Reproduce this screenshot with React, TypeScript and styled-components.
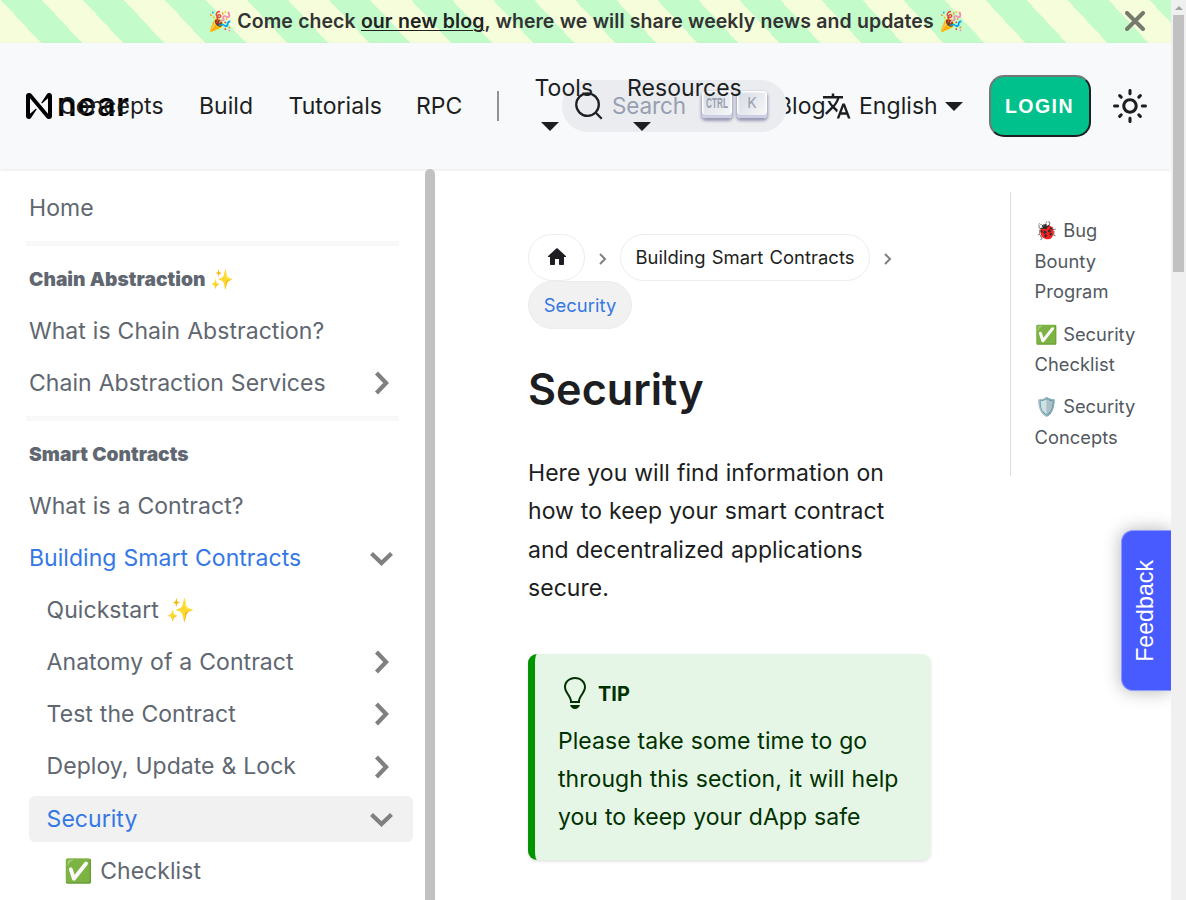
import React from "react";
import styled, { createGlobalStyle } from "styled-components";

const Global = createGlobalStyle`
  * { box-sizing: border-box; letter-spacing: 0.002em; word-spacing: 0.018em; }
  html, body { margin: 0; padding: 0; }
  body { width: 1186px; height: 900px; overflow: hidden; background: #fff; color: #1c1e21;
    font-family: Inter, "Noto Sans", sans-serif; font-size: 23px; line-height: 38.25px; }
`;
const Shell = styled.div`display: flex; width: 1186px; height: 900px; overflow: hidden;`;
const Page = styled.div`position: relative; width: 1171px; height: 900px; display: flex; flex-direction: column; overflow: hidden;`;
const Scrollbar = styled.div`width: 15px; height: 900px; background: #f0f0f0; display: flex; flex-direction: column; align-items: center; padding-top: 6px;`;
const ScrollArrow = styled.div`border: 4px solid transparent; border-top: 0; border-bottom: 4px solid #a3a3a3; height: 4px; width: 8px;`;
const ScrollThumb = styled.div`width: 11px; height: 257px; margin-top: 5px; background: #c1c1c1;`;

const Banner = styled.div`
  flex: none; height: 43px; display: flex; align-items: center; position: relative;
  background: repeating-linear-gradient(47deg, #f5fddb, #f5fddb 30px, #c3fbcb 30px, #c3fbcb 60px);
  box-shadow: 0 1px 2px rgba(0,0,0,.08);
`;
const BannerText = styled.div`flex: 1; text-align: center; font-size: 19.5px; font-weight: 600; color: #333; padding-bottom: 1px;
  a { color: #222; text-decoration: underline; text-decoration-thickness: 1px; text-underline-offset: 2px; }`;
const BannerClose = styled.div`position: absolute; right: 26px; top: 11px; display: flex;`;

const Nav = styled.nav`flex: none; height: 126px; display: flex; align-items: center; background: #f8f9fb; position: relative;
  box-shadow: 0 1px 3px rgba(0,0,0,.1); z-index: 2;`;
const Logo = styled.div`width: 33px; margin-left: 26px; display: flex; position: relative; svg { flex: none; }`;
const Wordmark = styled.span`position: absolute; left: 31px; top: -7px; font-size: 32px; font-weight: 600; color: #000; letter-spacing: 0.7px;`;
const NavLinks = styled.div`display: flex; align-items: center;`;
const NavLink = styled.span<{ $w: number }>`width: ${p => p.$w}px; flex: none; white-space: nowrap;`;
const Divider = styled.span`width: 2px; height: 30px; background: #919294; margin-right: 35.5px;`;
const Drop = styled.div<{ $w: number }>`width: ${p => p.$w}px; flex: none; display: flex; flex-direction: column; align-items: flex-start; margin-top: -12px;`;
const Caret = styled.i`display: block; flex: none; border: 9px solid transparent; border-top-color: #1c1e21; border-bottom: 0;`;
const DropCaret = styled(Caret)`margin: 15.5px 0 0 6px;`;
const Blog = styled.span`position: absolute; left: 777px;`;
const Search = styled.div`position: absolute; left: 562px; top: 37px; width: 225px; height: 52px; border-radius: 26px; background: #ebecf0;
  display: flex; align-items: center; padding-left: 12px;`;
const Placeholder = styled.span`margin-left: 8px; color: #969faf; width: 90px; flex: none; font-size: 22.5px; letter-spacing: -0.1px;`;
const NavText = styled.div`position: relative; z-index: 2; display: flex; align-items: center;`;
const Key = styled.span`width: 30px; height: 27px; flex: none; margin-right: 5px; margin-top: -3px; border-radius: 4px; display: flex; align-items: center; justify-content: center;
  color: #969faf; font-size: 14px; line-height: 20px; background: linear-gradient(-225deg, #d5dbe4, #f8f8f8);
  box-shadow: inset 0 -3px 0 0 #cdcde6, inset 0 0 1.5px 1.5px #fff, 0 2px 3px 1px rgba(30,35,90,.4); padding-bottom: 4px;`;
const Right = styled.div`position: absolute; left: 823px; right: 24px; top: 0; height: 126px; display: flex; align-items: center;`;
const Lang = styled.span`margin-left: 8.5px; width: 86px; flex: none;`;
const Login = styled.button`margin-left: 25.5px; width: 102px; height: 62px; flex: none; border: 2px solid; border-radius: 15px; background: #00c08b; color: #fff;
  font: 700 19.5px "Liberation Sans", sans-serif; letter-spacing: 1.5px; padding: 0; border-color: #767676 #1c1e21 #1c1e21 #767676;`;
const Sun = styled.svg`margin-left: 22.5px; flex: none;`;

const Body = styled.div`flex: 1; display: flex; min-height: 0;`;
const Side = styled.aside`width: 425px; flex: none; padding: 16px 12px 0 29px; display: flex; flex-direction: column; color: #606770;`;
const SideBar = styled.div`width: 10px; flex: none; background: #c1c1c1; border-radius: 5px 5px 0 0; position: relative; z-index: 3;`;
const Item = styled.div<{ $d?: number; $on?: boolean; $bg?: boolean }>`
  flex: none; height: 46px; margin-bottom: 6.13px; display: flex; align-items: center; justify-content: space-between; border-radius: 6px;
  padding: 0 18px 0 ${p => (p.$d || 0) * 17.6}px; color: ${p => (p.$on ? "#3578e5" : "#606770")}; background: ${p => (p.$bg ? "#f1f1f1" : "none")};
`;
const Rule = styled.div`flex: none; height: 5px; margin: 4px 14px 9px -3px; background: #f8f8f8;`;
const Heading = styled.div`flex: none; height: 46px; margin-bottom: 6.8px; line-height: 49px; font-size: 19.2px; font-weight: 900;`;

const Main = styled.main`width: 403px; margin-left: 93px; flex: none; padding-top: 65px;`;
const Crumbs = styled.div`display: flex; flex-wrap: wrap; align-items: center; font-size: 18.4px; line-height: 30px;`;
const Crumb = styled.span<{ $on?: boolean; $w: number }>`width: ${p => p.$w}px; height: ${p => (p.$on ? 48 : 47)}px; border-radius: 24px; border: 1px solid #ececec; display: flex; align-items: center; justify-content: center;
  padding-bottom: ${p => (p.$on ? 0 : 2)}px; word-spacing: 1px; background: ${p => (p.$on ? "#f1f1f1" : "#fff")}; color: ${p => (p.$on ? "#3578e5" : "#1c1e21")};`;
const CrumbSep = styled.svg`margin: 3px 13px 0 14px;`;
const Title = styled.h1`margin: 32px 0 0; font-size: 43.2px; line-height: 57px; font-weight: 600; letter-spacing: 0;`;
const Para = styled.p`margin: 36px 0 0;`;
const Tip = styled.section`margin-top: 47px; height: 206px; border-left: 7.5px solid #009400; border-radius: 9px; background: #e6f6e6; color: #003100; padding: 22px 12px 0 23px;
  box-shadow: 0 1.5px 3px rgba(0,0,0,.1);`;
const TipHead = styled.div`display: flex; align-items: center; font-size: 19.9px; font-weight: 700; line-height: 36px; height: 36px; gap: 12px; padding-left: 4px; margin-bottom: 9.8px;
  svg { margin-bottom: 2px; }`;
const Toc = styled.div`margin: 23px 0 0 79px; width: 140px; height: 284px; border-left: 1px solid #dadde1; padding: 23.3px 0 0 23.6px; font-size: 18.3px; line-height: 30.5px; color: #525860;
  div { margin-bottom: 11.8px; }`;
const Feedback = styled.div`position: absolute; z-index: 5; right: 0; top: 530px; width: 50px; height: 161px; border-radius: 12px 0 0 12px; background: #485bff; color: #fff;
  border: 1px solid #8f9aff; border-right: 0; display: flex; align-items: center; justify-content: center; padding-right: 2px; box-shadow: 0 0 18px rgba(0,0,0,.3);
  span { writing-mode: vertical-rl; transform: rotate(180deg); font: 23.2px "Liberation Sans", sans-serif; letter-spacing: 0; }`;

const Arrow = ({ down = false }: { down?: boolean }) => (
  <svg width="28" height="28" viewBox="0 0 28 28" fill="none" stroke="#808080" strokeWidth="4.2">
    <path d={down ? "M4.5 9.5l10 9.6 10-9.6" : "M9.5 4l9.6 10-9.6 10"} />
  </svg>
);

const entries: { t: string; d?: number; on?: boolean; bg?: boolean; a?: "r" | "d" }[] = [
  { t: "What is a Contract?" },
  { t: "Building Smart Contracts", on: true, a: "d" },
  { t: "Quickstart ✨", d: 1 },
  { t: "Anatomy of a Contract", d: 1, a: "r" },
  { t: "Test the Contract", d: 1, a: "r" },
  { t: "Deploy, Update & Lock", d: 1, a: "r" },
  { t: "Security", d: 1, on: true, bg: true, a: "d" },
  { t: "✅ Checklist", d: 2 },
];

export default function App() {
  return (
    <Shell>
      <Global />
      <Page>
        <Banner>
          <BannerText>🎉 Come check <a>our new blog</a>, where we will share weekly news and updates 🎉</BannerText>
          <BannerClose>
            <svg width="20" height="20" viewBox="0 0 20 20" stroke="#757a6c" strokeWidth="4" strokeLinecap="round"><path d="M2 2l16 16M18 2L2 18" /></svg>
          </BannerClose>
        </Banner>
        <Nav>
          <Blog>Blog</Blog>
          <Search>
            <svg width="30" height="30" viewBox="0 0 20 20" fill="none" stroke="#1c1e21" strokeWidth="1.5" strokeLinecap="round"><path d="M14.386 14.386l4.088 4.088-4.088-4.088A7.533 7.533 0 1 1 3.733 3.733a7.533 7.533 0 0 1 10.653 10.653z" /></svg>
            <Placeholder>Search</Placeholder>
            <Key><svg width="24" height="20"><text x="1" y="15" fontFamily="Liberation Sans" fontWeight="700" fontSize="15.5" fill="#969faf" textLength="22" lengthAdjust="spacingAndGlyphs">CTRL</text></svg></Key>
            <Key>K</Key>
          </Search>
          <Logo>
            <svg width="26" height="26" viewBox="0 0 90 90"><path d="M72.2 4.6L53.4 32.5c-1.3 1.9 1.2 4.2 3 2.6L74.900 19c.5-.4 1.200-.1 1.200.6v50.300c0 .7-.9 1-1.300.5L18.900 3.500C17.100 1.300 14.500 0 11.600 0h-2C4.300 0 0 4.300 0 9.600v70.800C0 85.700 4.300 90 9.600 90c3.300 0 6.400-1.700 8.200-4.600l18.800-27.900c1.300-1.900-1.200-4.200-3-2.600L15.100 71c-.5.4-1.200.1-1.200-.6V20.100c0-.7.9-1 1.300-.5l55.900 66.900c1.800 2.200 4.500 3.500 7.300 3.500h2c5.300 0 9.600-4.300 9.600-9.600V9.600C90 4.300 85.700 0 80.400 0c-3.400 0-6.500 1.700-8.200 4.600z" /></svg>
            <Wordmark>near</Wordmark>
          </Logo>
          <NavText>
            <NavLinks>
              <NavLink $w={140}>Concepts</NavLink>
              <NavLink $w={89.5}>Build</NavLink>
              <NavLink $w={127.5}>Tutorials</NavLink>
              <NavLink $w={81}>RPC</NavLink>
              <Divider />
              <Drop $w={92.5}><span>Tools</span><DropCaret /></Drop>
              <Drop $w={120}><span>Resources</span><DropCaret /></Drop>
            </NavLinks>
          </NavText>
          <Right>
            <svg width="28" height="28" viewBox="1 1 22 22" fill="#1c1e21"><path d="M12.870 15.070l-2.540-2.510.030-.030c1.740-1.940 2.980-4.170 3.710-6.530H17V4h-7V2H8v2H1v1.990h11.170C11.500 7.920 10.440 9.750 9 11.350 8.070 10.320 7.300 9.190 6.690 8h-2c.730 1.630 1.730 3.170 2.980 4.560l-5.090 5.020L4 19l5-5 3.110 3.110.760-2.040zM18.500 10h-2L12 22h2l1.120-3h4.750L21 22h2l-4.500-12zm-2.620 7l1.620-4.330L19.120 17h-3.240z" /></svg>
            <Lang>English</Lang>
            <Caret />
            <Login>LOGIN</Login>
            <Sun width="34" height="34" viewBox="1 1 22 22" fill="#1c1e21"><path d="M12 9c1.650 0 3 1.350 3 3s-1.350 3-3 3-3-1.350-3-3 1.350-3 3-3m0-2c-2.760 0-5 2.240-5 5s2.240 5 5 5 5-2.240 5-5-2.240-5-5-5zM2 13h2c.550 0 1-.450 1-1s-.450-1-1-1H2c-.550 0-1 .450-1 1s.450 1 1 1zm18 0h2c.550 0 1-.450 1-1s-.450-1-1-1h-2c-.550 0-1 .450-1 1s.450 1 1 1zM11 2v2c0 .550.450 1 1 1s1-.450 1-1V2c0-.550-.450-1-1-1s-1 .450-1 1zm0 18v2c0 .550.450 1 1 1s1-.450 1-1v-2c0-.550-.450-1-1-1s-1 .450-1 1z" /><path d="M5.300 5.300l1 1M17.700 17.700l1 1M5.300 18.700l1-1M17.700 6.300l1-1" stroke="#1c1e21" strokeWidth="2" strokeLinecap="round" /></Sun>
          </Right>
        </Nav>
        <Body>
          <Side>
            <Item>Home</Item>
            <Rule />
            <Heading>Chain Abstraction ✨</Heading>
            <Item>What is Chain Abstraction?</Item>
            <Item>Chain Abstraction Services<Arrow /></Item>
            <Rule />
            <Heading>Smart Contracts</Heading>
            {entries.map(e => <Item key={e.t} $d={e.d} $on={e.on} $bg={e.bg}>{e.t}{e.a && <Arrow down={e.a === "d"} />}</Item>)}
          </Side>
          <SideBar />
          <Main>
            <Crumbs>
              <Crumb $w={57}><svg width="24" height="24" viewBox="0 0 24 24" fill="#1c1e21"><path d="M10 19v-5h4v5c0 .550.450 1 1 1h3c.550 0 1-.450 1-1v-7h1.700c.460 0 .680-.570.330-.870L12.670 3.600c-.380-.340-.960-.340-1.340 0l-8.360 7.530c-.340.300-.130.870.330.870H5v7c0 .550.450 1 1 1h3c.550 0 1-.450 1-1z" /></svg></Crumb>
              <CrumbSep width="8" height="12" fill="none" stroke="#808080" strokeWidth="2"><path d="M1 1l5 5-5 5" /></CrumbSep>
              <Crumb $w={250}>Building Smart Contracts</Crumb>
              <CrumbSep width="8" height="12" fill="none" stroke="#808080" strokeWidth="2"><path d="M1 1l5 5-5 5" /></CrumbSep>
              <Crumb $w={104} $on>Security</Crumb>
            </Crumbs>
            <Title>Security</Title>
            <Para>Here you will find information on how to keep your smart contract and decentralized applications secure.</Para>
            <Tip>
              <TipHead><svg width="24" height="32" viewBox="0 0 12 16" fill="#003100"><path fillRule="evenodd" d="M6.500 0C3.480 0 1 2.190 1 5c0 .920.550 2.250 1 3 1.340 2.250 1.780 2.780 2 4v1h5v-1c.220-1.220.660-1.750 2-4 .450-.750 1-2.080 1-3 0-2.810-2.480-5-5.500-5zm3.640 7.480c-.250.440-.470.800-.670 1.110-.860 1.410-1.250 2.060-1.450 3.230-.020.050-.020.110-.020.170H5c0-.060 0-.130-.020-.170-.200-1.170-.590-1.830-1.450-3.230-.200-.310-.420-.670-.670-1.110C2.440 6.780 2 5.650 2 5c0-2.200 2.020-4 4.500-4 1.220 0 2.360.420 3.220 1.190C10.550 2.940 11 3.940 11 5c0 .660-.440 1.780-.860 2.480zM4 14h5c-.230 1.140-1.300 2-2.500 2s-2.270-.860-2.500-2z" /></svg>TIP</TipHead>
              Please take some time to go through this section, it will help you to keep your dApp safe
            </Tip>
          </Main>
          <Toc><div>🐞 Bug Bounty Program</div><div>✅ Security Checklist</div><div>🛡️ Security Concepts</div></Toc>
        </Body>
        <Feedback><span>Feedback</span></Feedback>
      </Page>
      <Scrollbar><ScrollArrow /><ScrollThumb /></Scrollbar>
    </Shell>
  );
}
